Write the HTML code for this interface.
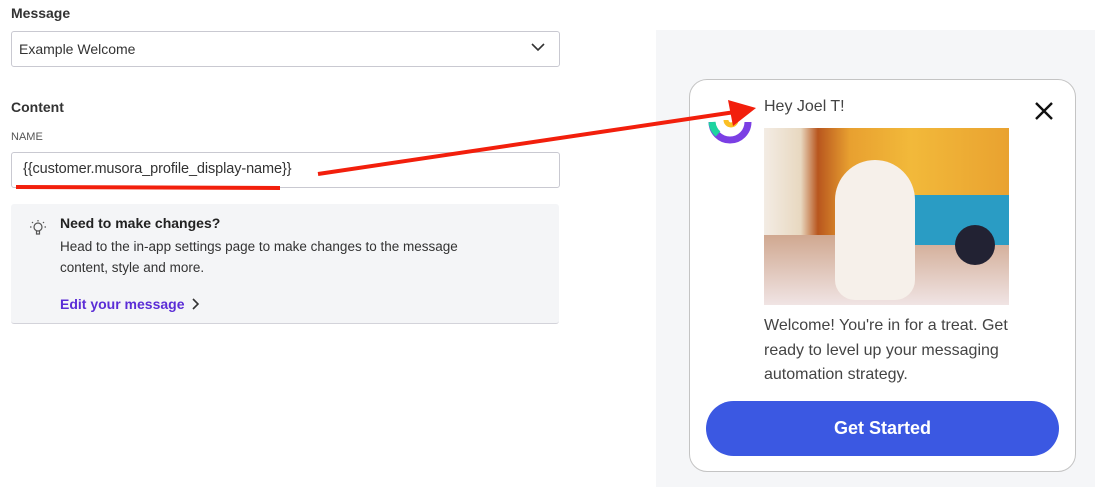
<!DOCTYPE html>
<html><head><style>
body{margin:0;width:1095px;height:487px;background:#fff;position:relative;overflow:hidden;font-family:"Liberation Sans",sans-serif;}
.a{position:absolute;}
</style></head><body>
<div class="a" style="left:11px;top:5px;font-size:14px;font-weight:bold;color:#333;">Message</div>
<div class="a" style="left:11px;top:31px;width:547px;height:34px;border:1px solid #c9c9d1;border-radius:3px;"></div>
<div class="a" style="left:19px;top:41px;font-size:14px;color:#333;">Example Welcome</div>
<svg class="a" style="left:531px;top:42px" width="14" height="10"><path d="M1 2 L7 8 L13 2" stroke="#333" stroke-width="1.6" fill="none"/></svg>
<div class="a" style="left:11px;top:99px;font-size:14px;font-weight:bold;color:#333;">Content</div>
<div class="a" style="left:11px;top:131px;font-size:11px;color:#555;">NAME</div>
<div class="a" style="left:11px;top:152px;width:547px;height:34px;border:1px solid #c9c9d1;border-radius:3px;"></div>
<div class="a" style="left:23px;top:161px;font-size:14.5px;color:#333;letter-spacing:-0.1px;">{{customer.musora_profile_display-name}}</div>
<div class="a" style="left:11px;top:204px;width:548px;height:119px;background:#f4f5f7;border-bottom:1px solid #d3d3da;border-radius:3px;"></div>
<svg class="a" style="left:28px;top:218px" width="20" height="20" fill="none" stroke="#555" stroke-width="1.2"><circle cx="10" cy="9" r="4"/><path d="M8.5 13v3h3v-3M10 2v1.5M4 4l1 1M16 4l-1 1M2 9h1.5M16.5 9H18"/></svg>
<div class="a" style="left:60px;top:215px;font-size:14px;font-weight:bold;color:#222;">Need to make changes?</div>
<div class="a" style="left:60px;top:236px;font-size:13.5px;color:#333;line-height:21px;width:430px;">Head to the in-app settings page to make changes to the message content, style and more.</div>
<div class="a" style="left:60px;top:296px;font-size:14px;font-weight:bold;color:#5b2dd6;">Edit your message</div>
<svg class="a" style="left:191px;top:297px" width="10" height="14"><path d="M2 2 L7 7 L2 12" stroke="#333" stroke-width="1.6" fill="none"/></svg>

<div class="a" style="left:656px;top:30px;width:439px;height:457px;background:#f5f6f8;"></div>
<div class="a" style="left:689px;top:79px;width:385px;height:391px;background:#fff;border:1.5px solid #c4c4c4;border-radius:18px;"></div>
<svg class="a" style="left:708px;top:112px" width="46" height="34"><path d="M4 10 A18 18 0 0 0 40 10" stroke="#7b3fe4" stroke-width="7" fill="none"/><path d="M4 10 A18 18 0 0 0 10 22" stroke="#1ed4a0" stroke-width="7" fill="none"/><path d="M18 8 A5 5 0 0 0 28 8" stroke="#fbbf24" stroke-width="5" fill="none"/></svg>
<div class="a" style="left:764px;top:98px;font-size:16px;color:#444;">Hey Joel T!</div>
<svg class="a" style="left:1034px;top:101px" width="20" height="20"><path d="M2 2L18 18M18 2L2 18" stroke="#111" stroke-width="2.4"/></svg>
<div class="a" style="left:764px;top:128px;width:245px;height:177px;background:linear-gradient(90deg,#f3ece4 0%,#e8d8c0 15%,#b8561e 22%,#e8a030 35%,#f2b93a 60%,#e9a230 100%);"></div>
<div class="a" style="left:764px;top:235px;width:245px;height:70px;background:linear-gradient(180deg,#d0a890,#f0e4e4);"></div>
<div class="a" style="left:840px;top:195px;width:169px;height:50px;background:#2a9cc4;"></div>
<div class="a" style="left:955px;top:225px;width:40px;height:40px;background:#223;border-radius:50%;"></div>
<div class="a" style="left:835px;top:160px;width:80px;height:140px;background:#f6f0ea;border-radius:40px 40px 20px 20px;"></div>
<div class="a" style="left:764px;top:314px;font-size:16px;color:#444;line-height:24.5px;width:280px;">Welcome! You're in for a treat. Get ready to level up your messaging automation strategy.</div>
<div class="a" style="left:706px;top:401px;width:353px;height:55px;background:#3b58e2;border-radius:28px;color:#fff;font-weight:bold;font-size:18px;text-align:center;line-height:55px;">Get Started</div>

<svg class="a" style="left:0;top:0" width="1095" height="487"><path d="M16 187 L280 188" stroke="#f21f0c" stroke-width="4"/><path d="M318 174 L735 112" stroke="#f21f0c" stroke-width="4"/><path d="M728 100 L756 108 L733 126 Z" fill="#f21f0c"/></svg>
</body></html>
